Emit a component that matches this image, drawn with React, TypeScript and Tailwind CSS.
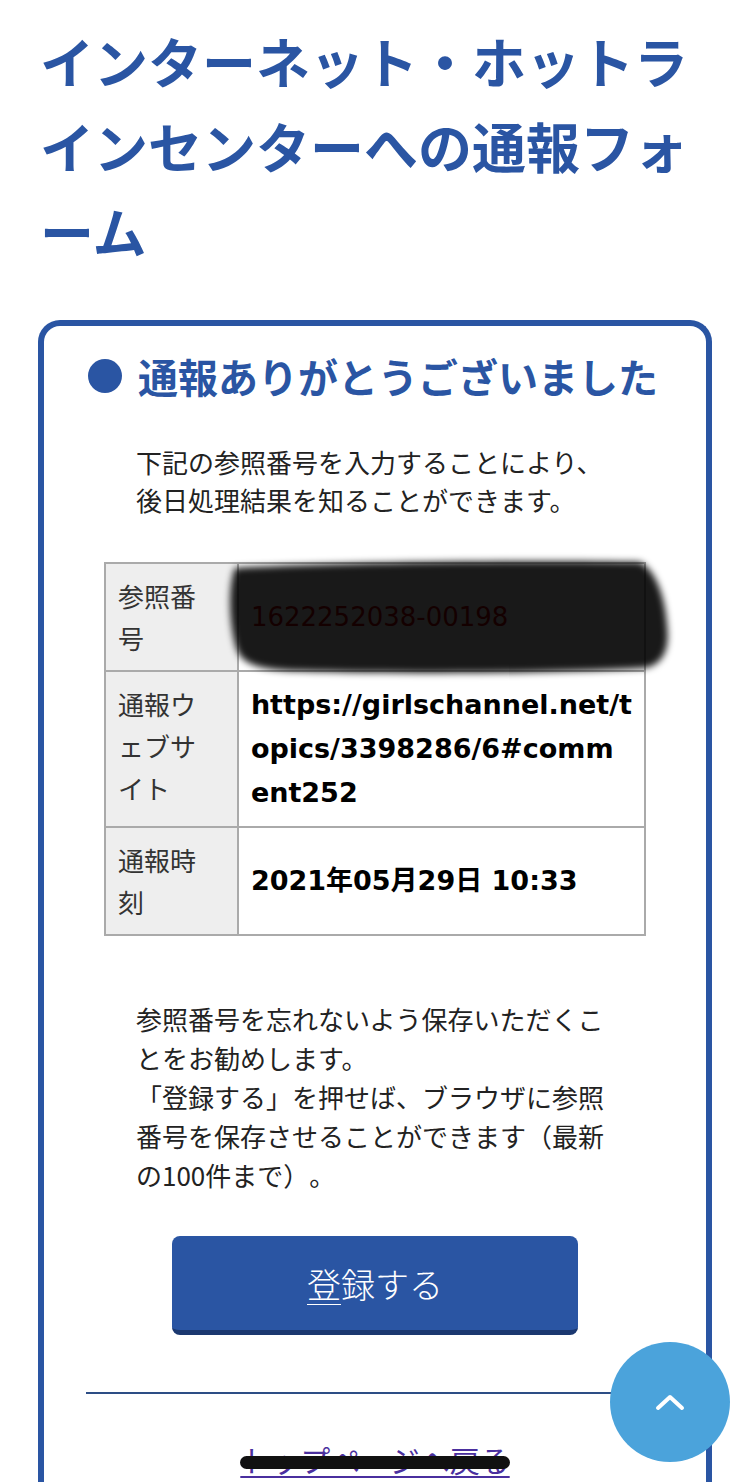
import React from 'react';

const jp = '"Noto Sans CJK JP", sans-serif';
const latin = '"DejaVu Sans", "Noto Sans CJK JP", sans-serif';

const rows = [
  { label: '参照番号', kind: 'ref' },
  { label: '通報ウェブサイト', kind: 'url' },
  { label: '通報時刻', kind: 'time' },
];

const App: React.FC = () => {
  return (
    <div lang="ja" className="relative bg-white text-[#222] [line-break:loose] [text-spacing-trim:space-all]" style={{ fontFamily: jp }}>
      {/* Page title */}
      <h1 className="px-[40px] pt-[18px] text-[54px] leading-[85px] font-bold text-[#2a55a3]">
        インターネット・ホットラインセンターへの通報フォーム
      </h1>

      {/* Result card */}
      <div className="mx-[38px] mt-[47px] border-[6px] border-b-0 border-[#2a55a3] rounded-t-[22px] pb-[120px]">
        <div className="flex items-center gap-[16px] pl-[44px] pt-[20px]">
          <span className="w-[34px] h-[34px] rounded-full bg-[#2a55a3] shrink-0" />
          <h2 className="text-[40px] leading-[60px] font-bold text-[#2a55a3]">通報ありがとうございました</h2>
        </div>

        <p className="px-[92px] mt-[37px] text-[26px] leading-[38px]">
          下記の参照番号を入力することにより、<br />
          後日処理結果を知ることができます。
        </p>

        {/* Detail table */}
        <div className="relative mx-[60px] mt-[43px]">
          <table className="w-full border-collapse border-2 border-[#aaa]">
            <tbody>
              {rows.map(r => (
                <tr key={r.kind}>
                  <th className="w-[134px] border-2 border-[#aaa] bg-[#eee] pl-[12px] pr-[30px] py-[11px] text-left align-top text-[26px] leading-[42px] font-normal text-[#333]">
                    {r.label}
                  </th>
                  <td className="border-2 border-[#aaa] px-[12px] py-[11px] align-middle">
                    {r.kind === 'ref' && (
                      <span className="text-[26px] text-[#d00000]" style={{ fontFamily: latin }}>1622252038-00198</span>
                    )}
                    {r.kind === 'url' && (
                      <span className="text-[27px] leading-[44px] font-bold text-black" style={{ fontFamily: latin }}>
                        https://girlschannel.net/t<br />opics/3398286/6#comm<br />ent252
                      </span>
                    )}
                    {r.kind === 'time' && (
                      <span className="text-[27px] leading-[44px] font-bold text-black" style={{ fontFamily: latin }}>
                        2021年05月29日 10:33
                      </span>
                    )}
                  </td>
                </tr>
              ))}
            </tbody>
          </table>
          {/* redaction scribble */}
          <svg className="absolute left-[111px] top-[-12px] pointer-events-none" width="470" height="135" viewBox="0 0 470 135">
            <defs>
              <filter id="smear" x="-10%" y="-10%" width="120%" height="120%">
                <feGaussianBlur stdDeviation="3.5" />
              </filter>
            </defs>
            <path
              d="M20 18 C120 12 320 10 425 12 C440 20 450 45 452 75 C455 100 448 114 430 118 C330 124 180 124 85 121 C50 120 28 116 22 100 C15 80 12 40 20 18 Z"
              fill="black"
              fillOpacity="0.9"
              filter="url(#smear)"
            />
          </svg>
        </div>

        <p className="px-[92px] mt-[63px] text-[26px] leading-[39px]">
          参照番号を忘れないよう保存いただくことをお勧めします。<br />
          「登録する」を押せば、ブラウザに参照番号を保存させることができます（最新の100件まで）。
        </p>

        <div className="flex justify-center mt-[42px]">
          <button className="w-[406px] h-[99px] rounded-[8px] bg-[#2a55a3] border-b-[5px] border-[#1b3870] text-white text-[34px] font-light">
            <span className="underline underline-offset-[6px] decoration-1">登</span>録する
          </button>
        </div>

        <div className="mx-[42px] mt-[57px] h-[2px] bg-[#2d4d85]" />

        <div className="flex justify-center mt-[43px]">
          <a href="#" className="relative text-[30px] leading-[45px] text-[#4a2f9e] underline underline-offset-[4px] decoration-2">
            トップページへ戻る
            <span className="absolute left-0 right-0 top-[19px] h-[13px] rounded-full bg-[#111] blur-[0.5px]" />
          </a>
        </div>
      </div>

      {/* Scroll to top */}
      <div className="absolute left-[610px] top-[1342px] w-[120px] h-[120px] rounded-full bg-[#4ba3db] flex items-center justify-center">
        <svg width="30" height="18" viewBox="0 0 30 18" fill="none">
          <polyline points="3,15 15,4 27,15" stroke="white" strokeWidth="4" strokeLinecap="round" strokeLinejoin="round" />
        </svg>
      </div>
    </div>
  );
};

export default App;
